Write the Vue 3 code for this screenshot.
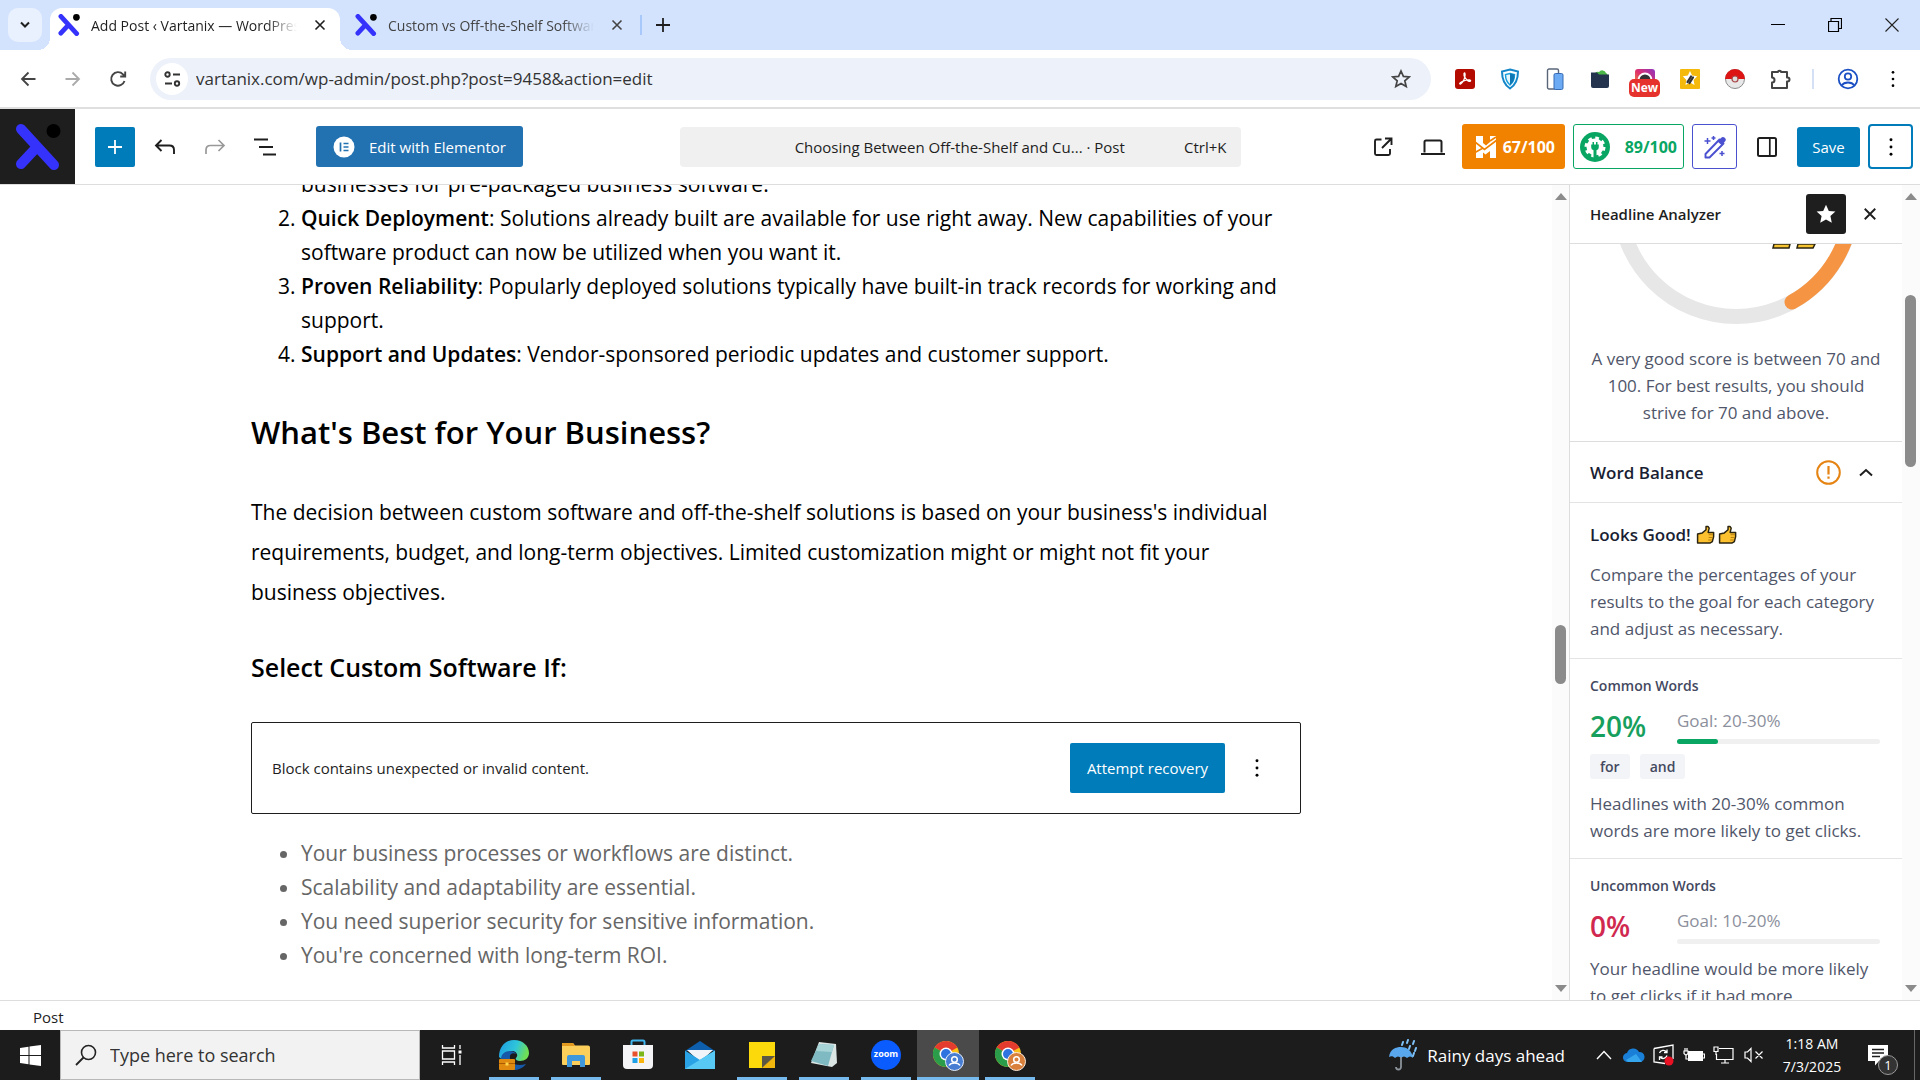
<template>
  <div class="screen">
    <!-- 公用图形 -->
    <svg class="defs" aria-hidden="true">
      <symbol id="logo" viewBox="0 0 46 46">
        <path d="M6 5 39 41M6 40 20 25" fill="none" stroke="#3532fb" stroke-width="10" stroke-linecap="round" />
        <circle cx="38.500" cy="7" r="7" fill="#000" />
      </symbol>
      <symbol id="cross" viewBox="0 0 12 12">
        <path d="M1.500 1.500l9 9M10.500 1.500l-9 9" fill="none" stroke="currentColor" stroke-width="1.600" />
      </symbol>
      <symbol id="dots" viewBox="0 0 6 24">
        <circle cx="3" cy="4" r="1.600" /><circle cx="3" cy="12" r="1.600" /><circle cx="3" cy="20" r="1.600" />
      </symbol>
      <symbol id="thumb" viewBox="0 0 18 18">
        <path d="M1.500 8.500 6 7.500 9.500 4.500V1.500h2l1 1.500-1 4h5.200v4l-1.200 4.800-2 1.200H1.500z" fill="#fdc12f" stroke="#2b2410" stroke-width="1.400" stroke-linejoin="round" />
        <path d="M12 9.200h4M12 11.800h3.700M11.500 14.200h3.600" stroke="#a8740e" stroke-width=".8" />
      </symbol>
      <symbol id="chrome" viewBox="0 0 32 32">
        <circle cx="14" cy="15" r="13" fill="#fbc116" />
        <path d="M14 15 2.700 8.500A13 13 0 0 1 25.300 8.500z" fill="#e33b2e" />
        <path d="M14 15 2.700 8.500A13 13 0 0 0 14 28l5-9z" fill="#2a9c4a" />
        <circle cx="14" cy="15" r="6.500" fill="#fff" /><circle cx="14" cy="15" r="5" fill="#2f73e0" />
      </symbol>
    </svg>

    <!-- 标签栏 -->
    <div class="tabs">
      <button class="tab-search" aria-label="Search tabs">
        <svg width="12" height="8" viewBox="0 0 12 8"><path d="M2 1.500 6 5.500 10 1.500" fill="none" stroke="#1f1f1f" stroke-width="2" /></svg>
      </button>
      <div v-for="tab in tabs" :key="tab.title" class="tab" :class="{ active: tab.active }">
        <svg class="fav" width="22" height="22"><use href="#logo" /></svg>
        <span class="tab-title">{{ tab.title }}</span>
        <button class="bare" aria-label="Close tab"><svg width="12" height="12"><use href="#cross" /></svg></button>
      </div>
      <span class="tab-sep"></span>
      <button class="new-tab bare" aria-label="New tab">
        <svg width="14" height="14" viewBox="0 0 14 14"><path d="M7 0v14M0 7h14" stroke="#1f1f1f" stroke-width="1.800" /></svg>
      </button>
      <div class="win">
        <button aria-label="Minimize"><svg width="14" height="14" viewBox="0 0 14 14"><path d="M0 6.500h14" stroke="#000" /></svg></button>
        <button aria-label="Restore"><svg width="14" height="14" viewBox="0 0 14 14"><path d="M.5 3.500h10v10H.5zM3 3.500V.5h10.500v10H11" fill="none" stroke="#000" stroke-width="1.200" /></svg></button>
        <button aria-label="Close"><svg width="14" height="14" viewBox="0 0 14 14"><path d="M.5.5l13 13M13.500.5l-13 13" stroke="#222" stroke-width="1.100" /></svg></button>
      </div>
    </div>

    <!-- 地址栏 -->
    <div class="toolbar">
      <button class="nav" aria-label="Back"><svg width="16" height="16" viewBox="0 0 16 16"><path d="M15.500 8H2M8.500 1.500 2 8l6.500 6.500" fill="none" stroke="#444" stroke-width="1.800" /></svg></button>
      <button class="nav" aria-label="Forward"><svg width="16" height="16" viewBox="0 0 16 16"><path d="M.5 8H14M7.500 1.500 14 8l-6.500 6.500" fill="none" stroke="#aaa" stroke-width="1.800" /></svg></button>
      <button class="nav" aria-label="Reload"><svg width="18" height="18" viewBox="0 0 18 18"><path d="M15.500 11A6.800 6.800 0 1 1 14 4.300L16 6.500M16.200 1.500v5h-5" fill="none" stroke="#444" stroke-width="1.900" /></svg></button>
      <div class="omni">
        <span class="site">
          <svg width="17" height="16" viewBox="0 0 17 16"><g fill="none" stroke="#333" stroke-width="1.900"><circle cx="3.500" cy="3.500" r="2.200" /><path d="M9 3.500h7M1 12.500h7" /><circle cx="13" cy="12.500" r="2.200" /></g></svg>
        </span>
        <input id="url" aria-label="Address" value="vartanix.com/wp-admin/post.php?post=9458&action=edit" />
        <svg width="20" height="20" viewBox="0 0 20 20"><path d="M10 2l2.400 5.400 5.900.5-4.500 3.900 1.400 5.800L10 14.500l-5.200 3.100 1.400-5.800-4.500-3.900 5.900-.5z" fill="none" stroke="#444" stroke-width="1.700" /></svg>
      </div>
      <div class="exts">
        <button aria-label="Acrobat"><svg width="22" height="22" viewBox="0 0 22 22"><rect x="1" y="1" width="20" height="20" rx="3" fill="#b30b00" /><path d="M10.500 5c1 0 .8 5-1.500 8.500-1.500 2.500-3.500 3-3.300 2 .3-1.500 5.500-3.800 9.800-3.500 1.800.2 1.300 1.800-.5 1.300C12 12.300 9.500 8 10 5.500z" fill="none" stroke="#fff" stroke-width="1.300" /></svg></button>
        <button aria-label="Shield"><svg width="20" height="22" viewBox="0 0 20 22"><path d="M10 1.500 18 3.500c0 8-2.500 13.500-8 17-5.500-3.500-8-9-8-17z" fill="#fff" stroke="#1586c8" stroke-width="2" /><path d="M10 5.500 14.500 6.500c0 5-1.500 8-4.500 10.500C7 14.500 5.500 11.500 5.500 6.500z" fill="#e6f7fd" stroke="#1aa0dc" stroke-width="1.500" /><path d="M10 5.500 14.500 6.500c0 5-1.500 8-4.500 10.500z" fill="#0e77b4" /></svg></button>
        <button aria-label="Devices"><svg width="18" height="22" viewBox="0 0 18 22"><rect x="1.500" y="1" width="11" height="20" rx="1.500" fill="#fff" stroke="#596579" stroke-width="1.400" /><rect x="8" y="5.500" width="9" height="16" rx="1.500" fill="#6cabf3" stroke="#376ab5" /></svg></button>
        <button aria-label="Folder"><svg width="22" height="22" viewBox="0 0 22 22"><path d="M6 8a3 3 0 0 1 4-4 4 4 0 0 1 7 1 2.500 2.500 0 0 1 1 4z" fill="#4cb749" /><path d="M2 4.500h6l2 2h10V18a2 2 0 0 1-2 2H4a2 2 0 0 1-2-2z" fill="#25344e" /></svg></button>
        <button aria-label="Instagram tool" class="ext-new">
          <svg width="22" height="22" viewBox="0 0 22 22"><defs><linearGradient id="ig" x1="0" y1="1" x2="1" y2="0"><stop offset="0" stop-color="#f7a429" /><stop offset=".5" stop-color="#dd2f6c" /><stop offset="1" stop-color="#9036c0" /></linearGradient></defs><rect x="1" y="1" width="20" height="20" rx="3" fill="url(#ig)" /><circle cx="11" cy="12" r="7.500" fill="#fff" /><circle cx="11" cy="12" r="5.500" fill="#333" /></svg>
          <span>New</span>
        </button>
        <button aria-label="Tag"><svg width="22" height="22" viewBox="0 0 22 22"><rect x="1" y="1" width="20" height="20" rx="1" fill="#f5b90b" /><path d="M11 3l2.200 4.600 5 .7-3.600 3.600.9 5.100-4.500-2.400L6.500 17l.9-5.100L3.800 8.300l5-.7z" fill="#fff" /><path d="M8.500 14 12 8.500M10.500 15 14 9.500" stroke="#333" stroke-width="2.200" stroke-linecap="round" /></svg></button>
        <button aria-label="Ball"><svg width="22" height="22" viewBox="0 0 22 22"><circle cx="11" cy="11" r="9.500" fill="#e8e8e8" stroke="#8b8b8b" /><path d="M1 11a10 10 0 0 1 20 0z" fill="#dc1414" /><circle cx="11" cy="11" r="3" fill="#ddd" stroke="#a44" stroke-width="1.200" /></svg></button>
        <button aria-label="Extensions"><svg width="22" height="22" viewBox="0 0 22 22"><path d="M3 4h6v-.5a2 2 0 0 1 3 0V4h6v5.500h.5a2 2 0 0 1 0 4H18V20H3v-5.500a2.500 2.500 0 0 0 0-5z" fill="none" stroke="#444" stroke-width="2" stroke-linejoin="round" /></svg></button>
      </div>
      <span class="bar-sep"></span>
      <button class="nav" aria-label="Profile"><svg width="22" height="22" viewBox="0 0 22 22"><g fill="none" stroke="#1b50c4" stroke-width="1.800"><circle cx="11" cy="11" r="9.300" /><circle cx="11" cy="8.500" r="3.200" /><path d="M4.500 17.500c3-4 10-4 13 0" /></g></svg></button>
      <button class="nav" aria-label="Menu"><svg width="6" height="20"><use href="#dots" /></svg></button>
    </div>

    <!-- 编辑器头部 -->
    <header class="editor-head">
      <div class="head-left">
        <a href="#" class="home" aria-label="View posts"><svg width="46" height="46"><use href="#logo" /></svg></a>
        <button class="inserter" aria-label="Add block"><svg width="16" height="16" viewBox="0 0 16 16"><path d="M8 1v14M1 8h14" stroke="#fff" stroke-width="1.800" /></svg></button>
        <button class="tool" aria-label="Undo"><svg width="22" height="18" viewBox="0 0 22 18"><path d="M7.500 2 2 7.500 7.500 13M2 7.500h13.500c3 0 4.500 1.500 4.500 4.500v4" fill="none" stroke="#1e1e1e" stroke-width="1.900" /></svg></button>
        <button class="tool" aria-label="Redo"><svg width="22" height="18" viewBox="0 0 22 18"><path d="M14.500 2 20 7.500 14.500 13M20 7.500H6.500C3.500 7.500 2 9 2 12v4" fill="none" stroke="#999" stroke-width="1.700" /></svg></button>
        <button class="tool" aria-label="Document overview"><svg width="24" height="18" viewBox="0 0 24 18"><path d="M1 1.500h14M6 9h14M10 16.500h13" stroke="#1e1e1e" stroke-width="1.900" /></svg></button>
        <button class="elementor">
          <svg width="22" height="22" viewBox="0 0 22 22"><circle cx="11" cy="11" r="10.500" fill="#fff" /><path d="M7.500 6.500v9M10.500 7.500h5M10.500 11h5M10.500 14.500h5" stroke="#2271b1" stroke-width="1.700" /></svg>
          Edit with Elementor
        </button>
      </div>
      <button class="command">
        <span>Choosing Between Off-the-Shelf and Cu... · Post</span>
        <kbd>Ctrl+K</kbd>
      </button>
      <div class="head-right">
        <button class="tool small" aria-label="View post"><svg width="20" height="20" viewBox="0 0 20 20"><path d="M8.500 2.500H3.500A1.500 1.500 0 0 0 2 4v12.500A1.500 1.500 0 0 0 3.500 18H15.500a1.500 1.500 0 0 0 1.500-1.500V12M12 1.500h6.500V8M18.500 1.500 9 11" fill="none" stroke="#1e1e1e" stroke-width="1.900" /></svg></button>
        <button class="tool small" aria-label="Preview"><svg width="26" height="18" viewBox="0 0 26 18"><path d="M4.500 14.500V4A1.500 1.500 0 0 1 6 2.500h14A1.500 1.500 0 0 1 21.500 4v10.500M1 16h24" fill="none" stroke="#1e1e1e" stroke-width="2" /></svg></button>
        <button class="score orange">
          <svg width="24" height="24" viewBox="0 0 24 24"><path d="M2 1h7v22H2zM16 1h6v22h-6zM9 8l3 2.500L16 7v9l-4.500 3.500L9 17.500z" fill="#fff" /><path d="M1 7l9.500 7.500L23 5M1 17.500 9 13M16 6l6-4" fill="none" stroke="#f18200" stroke-width="1.600" /></svg>
          67/100
        </button>
        <button class="score green">
          <svg width="30" height="30" viewBox="0 0 30 30"><circle cx="15" cy="15" r="15" fill="#09a663" /><circle cx="15" cy="15" r="8.500" fill="#fff" /><circle cx="15" cy="15" r="9" fill="none" stroke="#fff" stroke-width="3" stroke-dasharray="3.600 3.470" /><path d="M11.200 12.500h1.300V10h1.500v2.500h2V10h1.500v2.500h1.300v2.700a3 3 0 0 1-2.300 3V26h-3v-7.800a3 3 0 0 1-2.300-3z" fill="#09a663" /></svg>
          89/100
        </button>
        <button class="magic" aria-label="AI assistant"><svg width="24" height="24" viewBox="0 0 24 24"><path d="M2.500 19 16.500 4.500l4 4L6.500 22.500h-4z" fill="none" stroke="#4a50d0" stroke-width="1.900" stroke-linejoin="round" /><path d="M14.500 6.500 18 3a2.500 2.500 0 0 1 4 3.500L18.500 10z" fill="#4a50d0" /><path d="M4.500 3v6M1.500 6h6M10.500 1v4M8.500 3h4M19 16v5M16.500 18.500h5" stroke="#4a50d0" stroke-width="1.500" /></svg></button>
        <button class="tool panel" aria-label="Settings"><svg width="20" height="20" viewBox="0 0 20 20"><rect x="1" y="1" width="18" height="18" rx="1.500" fill="none" stroke="#1e1e1e" stroke-width="2" /><path d="M12.800 1v18" stroke="#1e1e1e" stroke-width="1.700" /></svg></button>
        <button class="save">Save</button>
        <button class="options" aria-label="Options"><svg width="6" height="22"><use href="#dots" /></svg></button>
      </div>
    </header>

    <!-- 主体 -->
    <div class="body">
      <main class="canvas">
        <article class="post">
          <ol>
            <li class="tail">businesses for pre-packaged business software.</li>
            <li v-for="item in benefits" :key="item.name"><strong>{{ item.name }}</strong>: {{ item.text }}</li>
          </ol>
          <h2>What's Best for Your Business?</h2>
          <p>The decision between custom software and off-the-shelf solutions is based on your business's individual requirements, budget, and long-term objectives. Limited customization might or might not fit your business objectives.</p>
          <h3>Select Custom Software If:</h3>
          <div class="warning">
            <span>Block contains unexpected or invalid content.</span>
            <button class="recover">Attempt recovery</button>
            <button class="bare" aria-label="More options"><svg width="6" height="22"><use href="#dots" /></svg></button>
          </div>
          <ul>
            <li v-for="reason in reasons" :key="reason">{{ reason }}</li>
          </ul>
        </article>
      </main>
      <div class="scroll editor-scroll">
        <i class="up"></i><i class="thumb editor-thumb"></i><i class="down"></i>
      </div>

      <aside class="side">
        <div class="side-main">
          <div class="side-head">
            <h4>Headline Analyzer</h4>
            <button class="pin" aria-label="Unpin"><svg width="20" height="20" viewBox="0 0 20 20"><path d="M10 .8l2.800 6.100 6.600.7-5 4.500 1.400 6.600L10 15.400l-5.800 3.300 1.400-6.600-5-4.500 6.600-.7z" fill="#fff" /></svg></button>
            <button class="bare" aria-label="Close"><svg width="14" height="14"><use href="#cross" /></svg></button>
          </div>
          <div class="side-scroll">
            <section class="gauge">
              <svg width="250" height="80" viewBox="0 0 250 80">
                <circle cx="125" cy="-44" r="116.500" fill="none" stroke="#e7e7e7" stroke-width="15" />
                <path d="M241 -44A116.500 116.500 0 0 1 181 58" fill="none" stroke="#f59544" stroke-width="15" stroke-linecap="round" />
                <path d="M163 0h16l-1 4h-16zM187 0h17l-2 4h-16z" fill="#f6c331" stroke="#2b2410" stroke-width="1.500" />
              </svg>
              <p>A very good score is between 70 and 100. For best results, you should strive for 70 and above.</p>
            </section>
            <button class="balance">
              <span>Word Balance</span>
              <svg width="25" height="25" viewBox="0 0 25 25"><circle cx="12.500" cy="12.500" r="11.300" fill="none" stroke="#e58412" stroke-width="2" /><path d="M12.500 6v8.500M12.500 16.500v2.300" stroke="#e58412" stroke-width="2.200" /></svg>
              <svg width="14" height="9" viewBox="0 0 14 9"><path d="M1 7.500 7 2l6 5.500" fill="none" stroke="#1e1e1e" stroke-width="2" /></svg>
            </button>
            <section class="looks">
              <h4><span>Looks Good!</span><svg width="19" height="19"><use href="#thumb" /></svg><svg width="19" height="19"><use href="#thumb" /></svg></h4>
              <p>Compare the percentages of your results to the goal for each category and adjust as necessary.</p>
            </section>
            <section v-for="w in words" :key="w.name" class="words">
              <h5>{{ w.name }}</h5>
              <div class="result">
                <strong :class="w.level">{{ w.value }}%</strong>
                <div class="goal">
                  <span>Goal: {{ w.goal }}</span>
                  <div class="track"><div :style="{ width: w.value + '%' }"></div></div>
                </div>
              </div>
              <div v-if="w.tags.length" class="tags"><span v-for="t in w.tags" :key="t">{{ t }}</span></div>
              <p>{{ w.tip }}</p>
            </section>
          </div>
        </div>
        <div class="scroll">
          <i class="up"></i><i class="thumb side-thumb"></i><i class="down"></i>
        </div>
      </aside>
    </div>

    <footer class="crumbs">Post</footer>

    <!-- 任务栏 -->
    <div class="taskbar">
      <button class="start" aria-label="Start"><svg width="21" height="21" viewBox="0 0 21 21"><path d="M0 3 8.500 1.700V10H0zM9.500 1.500 21 0v10H9.500zM0 11h8.500v8.300L0 18zM9.500 11H21v10L9.500 19.500z" fill="#fff" /></svg></button>
      <label class="find">
        <svg width="22" height="22" viewBox="0 0 22 22"><circle cx="13.500" cy="8.500" r="7" fill="none" stroke="#222" stroke-width="1.600" /><path d="M8.500 13.500 1 21" stroke="#222" stroke-width="1.800" /></svg>
        <input type="text" placeholder="Type here to search" aria-label="Search" />
      </label>
      <button class="view" aria-label="Task view"><svg width="22" height="20" viewBox="0 0 22 20"><path d="M1.500 0v3h12V0M1.500 20v-3h12v3M1.500 6h12v8h-12zM19 0v4M19 10v10" fill="none" stroke="#fff" stroke-width="1.300" /><rect x="17.500" y="5.500" width="3" height="3" fill="#fff" /></svg></button>
      <div class="apps">
        <button class="open" aria-label="Edge"><svg width="32" height="32" viewBox="0 0 32 32"><defs><linearGradient id="edge" x1="0" y1="0" x2="1" y2=".3"><stop offset="0" stop-color="#1b9be4" /><stop offset=".6" stop-color="#2fc5da" /><stop offset="1" stop-color="#6fdf55" /></linearGradient></defs><path d="M1 18C1 7 8 1 16 1c9 0 15 6 15 13 0 5-4 8-9 8-4 0-5-2-4-3 3-3 0-7-4-7-6 0-8 5-6 12z" fill="url(#edge)" /><path d="M12 17c-1 7 6 11 16 8-3 4-8 6-12 6C8 31 3 26 3 20c0-5 4-8 9-8 3 0 5 1 6 3-3-2-6 0-6 2z" fill="#1659a8" /><rect x="1" y="20" width="16" height="11" rx="1" fill="#e08a0f" /><path d="M1 24.500h16" stroke="#a95c05" /><rect x="7.500" y="23.500" width="3" height="3" fill="#ffd34a" /></svg></button>
        <button class="open" aria-label="File Explorer"><svg width="30" height="30" viewBox="0 0 30 30"><path d="M1 3h11l2 2.500h13a2 2 0 0 1 2 2V24a1 1 0 0 1-1 1H2a1 1 0 0 1-1-1z" fill="#fccf5a" /><path d="M1 3h11l2 3H1z" fill="#e29b20" /><path d="M6 27V17a2 2 0 0 1 2-2h14a2 2 0 0 1 2 2v10h-5v-6h-8v6z" fill="#3f97dc" /></svg></button>
        <button aria-label="Store"><svg width="30" height="32" viewBox="0 0 30 32"><path d="M8.500 7V3a1.500 1.500 0 0 1 1.500-1.500h10A1.500 1.500 0 0 1 21.500 3v4" fill="none" stroke="#41b4ec" stroke-width="2" /><path d="M0 6h30v20a4 4 0 0 1-4 4H4a4 4 0 0 1-4-4z" fill="#f4f4f6" /><path d="M9.500 12.500h5v5h-5z" fill="#e8502b" /><path d="M16 12.500h5v5h-5z" fill="#7cb518" /><path d="M9.500 19h5v5h-5z" fill="#1e9fe6" /><path d="M16 19h5v5h-5z" fill="#f9b50d" /></svg></button>
        <button aria-label="Mail"><svg width="30" height="30" viewBox="0 0 30 30"><path d="M0 11 15 1l15 10z" fill="#0d5fae" /><path d="M2 10h26L15 22z" fill="#f1f5f9" /><path d="M0 10.500 15 20 30 10.500V29H0z" fill="#29a3e6" /><path d="M0 29 30 10.500V29z" fill="#58c8f5" /></svg></button>
        <button class="open" aria-label="Sticky Notes"><svg width="28" height="28" viewBox="0 0 28 28"><path d="M1 1h26v14L14 27H1z" fill="#fbd90a" /><path d="M14 27V15h13z" fill="#5c5644" /><path d="M14 27 27 15v12z" fill="#f2b70d" /></svg></button>
        <button class="open" aria-label="Notepad"><svg width="28" height="28" viewBox="0 0 28 28"><path d="M9 1 26 3 27 22l-5 4L1 22z" fill="#dbe5e4" /><path d="M9 3 24 4 18 25 1 20z" fill="#7fbac2" /><path d="M9 3 24 4 22 11 6 10z" fill="#a7d4d7" /></svg></button>
        <button class="open" aria-label="Zoom"><span class="zoom">zoom</span></button>
        <button class="open current" aria-label="Chrome"><svg width="32" height="32" viewBox="0 0 32 32"><use href="#chrome" /><circle cx="22.500" cy="22.500" r="9" fill="#477dd2" stroke="#e3ecfb" /><circle cx="22.500" cy="20.500" r="2.800" fill="none" stroke="#fff" stroke-width="1.500" /><path d="M17 26.500c2-3.500 9-3.500 11 0" fill="none" stroke="#fff" stroke-width="1.500" /></svg></button>
        <button class="open" aria-label="Chrome profile 2"><svg width="32" height="32" viewBox="0 0 32 32"><use href="#chrome" /><circle cx="22.500" cy="22.500" r="9" fill="#d9813c" stroke="#fbeadb" /><circle cx="22.500" cy="20.500" r="2.800" fill="none" stroke="#fff" stroke-width="1.500" /><path d="M17 26.500c2-3.500 9-3.500 11 0" fill="none" stroke="#fff" stroke-width="1.500" /></svg></button>
      </div>
      <div class="tray">
        <button class="weather">
          <svg width="30" height="32" viewBox="0 0 30 32"><path d="M1 18C2 10 8 8 13 8s11 3 12 11c-2-2-4-2-6 0-2-2-4-2-6 0-2-2-4-2-6 0-2-2-4-2-6-1z" fill="#59a8ee" /><path d="M13 18v10a2.500 2.500 0 0 1-5 0" fill="none" stroke="#8b9299" stroke-width="1.800" /><path d="M15 3l-1 3M20 1l-1 3M26 2l-1 3M22 7l-1 3M28 9l-1 3M26 14l-1 3" stroke="#7fc3fa" stroke-width="2" stroke-linecap="round" /></svg>
          Rainy days ahead
        </button>
        <button aria-label="Hidden icons"><svg width="16" height="10" viewBox="0 0 16 10"><path d="M1 9 8 1.500 15 9" fill="none" stroke="#fff" stroke-width="1.400" /></svg></button>
        <button aria-label="OneDrive"><svg width="22" height="16" viewBox="0 0 22 16"><path d="M5 15a4.500 4.500 0 0 1-1-9 6.500 6.500 0 0 1 12-1 5 5 0 0 1 1 10z" fill="#1a7fd6" /><path d="M3 13 13 7l6 8H5z" fill="#35a6ee" /></svg></button>
        <button aria-label="Updates"><svg width="22" height="22" viewBox="0 0 22 22"><path d="M1 4.500 20 1v14M1 4.500V18l11 1.500" fill="none" stroke="#fff" stroke-width="1.300" /><path d="M6.500 9a4 4 0 0 1 7-1M14 5.500V8.500h-3M14 11.500a4 4 0 0 1-7 1.500M6.500 16v-3h3" fill="none" stroke="#fff" stroke-width="1.300" /><circle cx="16" cy="17" r="4.500" fill="#e81224" /></svg></button>
        <button aria-label="Battery"><svg width="22" height="16" viewBox="0 0 22 16"><rect x="5.500" y="4.500" width="14" height="9" fill="#fff" stroke="#fff" /><path d="M20 7h1.500v4H20M1 4h4v2.500L3 8.500 1 6.500zM2 4V1M4 4V1M3 8v4h2" fill="none" stroke="#fff" stroke-width="1.200" /></svg></button>
        <button aria-label="Network"><svg width="22" height="18" viewBox="0 0 22 18"><path d="M6 2.500h14v11H3.500V8M12 13.500V17M8 17h8M1 1h4v4.500H1zM3 5.500V9" fill="none" stroke="#fff" stroke-width="1.200" /></svg></button>
        <button aria-label="Muted"><svg width="20" height="16" viewBox="0 0 20 16"><path d="M1 5h2.500L7 1.500v13L3.500 11H1zM11.500 4.500l7 7M18.500 4.500l-7 7" fill="none" stroke="#fff" stroke-width="1.200" /></svg></button>
        <div class="clock"><span>1:18 AM</span><span>7/3/2025</span></div>
        <button class="notes" aria-label="Notifications">
          <svg width="20" height="21" viewBox="0 0 20 21"><path d="M0 0h20v16h-9l-4 4.500V16H0z" fill="#fff" /><path d="M4 4.500h12M4 8h12M4 11.500h8" stroke="#1c1c1c" stroke-width="1.500" /></svg>
          <span>1</span>
        </button>
      </div>
    </div>
  </div>
</template>

<script setup>
import { ref } from 'vue';

const tabs = ref([
  { title: 'Add Post ‹ Vartanix — WordPress', active: true },
  { title: 'Custom vs Off-the-Shelf Software', active: false }
]);

// 正文列表
const benefits = [
  { name: 'Quick Deployment', text: 'Solutions already built are available for use right away. New capabilities of your software product can now be utilized when you want it.' },
  { name: 'Proven Reliability', text: 'Popularly deployed solutions typically have built-in track records for working and support.' },
  { name: 'Support and Updates', text: 'Vendor-sponsored periodic updates and customer support.' }
];

const reasons = [
  'Your business processes or workflows are distinct.',
  'Scalability and adaptability are essential.',
  'You need superior security for sensitive information.',
  "You're concerned with long-term ROI."
];

// 标题分析结果
const words = ref([
  { name: 'Common Words', value: 20, goal: '20-30%', level: 'good', tags: ['for', 'and'], tip: 'Headlines with 20-30% common words are more likely to get clicks.' },
  { name: 'Uncommon Words', value: 0, goal: '10-20%', level: 'bad', tags: [], tip: 'Your headline would be more likely to get clicks if it had more' }
]);
</script>

<style>
html, body {
  margin: 0;
  overflow: hidden;
}
</style>

<style scoped>
* {
  box-sizing: border-box;
}

.screen {
  display: flex;
  flex-direction: column;
  height: 100vh;
  background: #fff;
  color: #1e1e1e;
  font-family: "Open Sans", "Noto Sans", sans-serif;
  font-size: 15px;
}

.defs {
  position: absolute;
  width: 0;
  height: 0;
}

button {
  display: flex;
  align-items: center;
  justify-content: center;
  flex: none;
  padding: 0;
  border: 0;
  background: none;
  color: inherit;
  font: inherit;
  white-space: nowrap;
}

input {
  min-width: 0;
  padding: 0;
  border: 0;
  outline: 0;
  background: none;
  font: inherit;
}

svg {
  flex: none;
}

h2, h3, h4, h5, p, ol, ul {
  margin: 0;
}

/* 标签栏 */
.tabs {
  display: flex;
  align-items: center;
  flex: none;
  height: 50px;
  padding-left: 8px;
  background: #d3e3fd;
}

.tab-search {
  width: 34px;
  height: 34px;
  margin-right: 8px;
  border-radius: 10px;
  background: #e9f1fe;
}

.bare {
  width: 24px;
  height: 24px;
}

.tab {
  position: relative;
  display: flex;
  align-items: center;
  align-self: flex-end;
  width: 290px;
  height: 42px;
  padding: 0 8px 8px;
  color: #444;
  font-size: 14px;
}

.tab + .tab {
  margin-left: 7px;
}

.tab.active {
  border-radius: 12px 12px 0 0;
  background: #fff;
  color: #1f1f1f;
}

.tab.active::before,
.tab.active::after {
  content: '';
  position: absolute;
  bottom: 0;
  width: 12px;
  height: 12px;
}

.tab.active::before {
  left: -12px;
  background: radial-gradient(circle at 0 0, transparent 12px, #fff 12px);
}

.tab.active::after {
  right: -12px;
  background: radial-gradient(circle at 100% 0, transparent 12px, #fff 12px);
}

.tab-title {
  flex: 1;
  margin: 0 11px;
  overflow: hidden;
  white-space: nowrap;
  -webkit-mask-image: linear-gradient(90deg, #000 85%, transparent);
  mask-image: linear-gradient(90deg, #000 85%, transparent);
}

.tab-sep {
  width: 2px;
  height: 20px;
  margin-left: 3px;
  background: #a8c7fa;
}

.new-tab {
  margin-left: 9px;
}

.win {
  display: flex;
  margin-left: auto;
}

.win button {
  width: 57px;
  height: 46px;
}

/* 地址栏 */
.toolbar {
  display: flex;
  align-items: center;
  flex: none;
  height: 59px;
  padding: 0 5px;
  border-bottom: 2px solid #dfdfdf;
}

.nav {
  width: 45px;
  height: 40px;
}

.omni {
  display: flex;
  align-items: center;
  flex: 1;
  height: 42px;
  margin: 0 11px 0 10px;
  padding: 0 20px 0 6px;
  border-radius: 21px;
  background: #edf1fa;
}

.omni input {
  flex: 1;
  color: #333;
  font-size: 17px;
}

.site {
  display: flex;
  align-items: center;
  justify-content: center;
  width: 32px;
  height: 32px;
  margin-right: 8px;
  border-radius: 50%;
  background: #fff;
}

.exts {
  display: flex;
}

.exts button {
  position: relative;
  width: 45px;
  height: 40px;
}

.ext-new span {
  position: absolute;
  top: 20px;
  left: 7px;
  width: 31px;
  border-radius: 5px;
  background: #e5322d;
  color: #fff;
  font-size: 12px;
  font-weight: 700;
  line-height: 18px;
  text-align: center;
}

.bar-sep {
  width: 2px;
  height: 20px;
  margin: 0 11px 0 10px;
  background: #d3e0f5;
}

/* 编辑器头部 */
.editor-head {
  display: grid;
  grid-template-columns: 1fr 561px 1fr;
  align-items: center;
  flex: none;
  height: 76px;
  border-bottom: 1px solid #ddd;
}

.head-left,
.head-right {
  display: flex;
  align-items: center;
}

.head-right {
  justify-content: flex-end;
  gap: 8px;
  padding-right: 7px;
}

.home {
  display: flex;
  align-items: center;
  justify-content: center;
  width: 75px;
  height: 75px;
  background: #1e1e1e;
}

.inserter {
  width: 40px;
  height: 40px;
  margin: 0 5px 0 20px;
  border-radius: 2px;
  background: #007cba;
}

.tool {
  width: 50px;
  height: 40px;
}

.tool.small {
  width: 42px;
}

.tool.panel {
  width: 44px;
}

.elementor {
  gap: 14px;
  height: 41px;
  margin-left: 26px;
  padding: 0 17px;
  border-radius: 3px;
  background: #2271b1;
  color: #fff;
}

.command {
  height: 40px;
  padding: 0 14px 0 56px;
  border-radius: 4px;
  background: #f0f0f0;
}

.command span {
  flex: 1;
}

.command kbd {
  font: inherit;
}

.score {
  justify-content: space-between;
  height: 45px;
  border-radius: 3px;
  font-size: 16px;
  font-weight: 700;
}

.orange {
  width: 103px;
  padding: 0 10px 0 12px;
  background: #f18200;
  color: #fff;
}

.green {
  width: 111px;
  padding: 0 6px;
  border: 1px solid #09a663;
  color: #09a663;
}

.magic {
  width: 45px;
  height: 45px;
  border: 1px solid #4a50d0;
  border-radius: 3px;
}

.save {
  width: 63px;
  height: 40px;
  border-radius: 3px;
  background: #007cba;
  color: #fff;
}

.options {
  width: 45px;
  height: 45px;
  border: 2px solid #007cba;
  border-radius: 4px;
}

/* 主体 */
.body {
  display: flex;
  flex: 1;
  min-height: 0;
}

.canvas {
  flex: 1;
  overflow: hidden;
}

.post {
  max-width: 1050px;
  margin: -18px auto 0;
  color: #000;
  font-size: 21px;
  line-height: 34px;
}

ol, ul {
  padding-left: 50px;
}

.tail {
  list-style: none;
}

strong {
  font-weight: 600;
}

h2 {
  margin: 42px 0 41px;
  font-size: 31px;
  font-weight: 600;
  line-height: 38px;
}

.post p {
  padding-right: 12px;
  line-height: 40px;
}

h3 {
  margin: 39px 0 39px;
  font-size: 25px;
  font-weight: 600;
  line-height: 32px;
}

.warning {
  display: flex;
  align-items: center;
  height: 92px;
  padding: 0 31px 0 20px;
  border: 1px solid #1e1e1e;
  border-radius: 2px;
  color: #1e1e1e;
  font-size: 15px;
}

.warning span {
  flex: 1;
}

.recover {
  width: 155px;
  height: 50px;
  margin-right: 20px;
  border-radius: 2px;
  background: #007cba;
  color: #fff;
}

ul {
  margin-top: 22px;
  color: #666;
}

/* 滚动条 */
.scroll {
  position: relative;
  flex: none;
  width: 18px;
  background: #fbfbfb;
}

.editor-scroll {
  width: 17px;
}

.scroll i {
  position: absolute;
  left: 3px;
}

.up, .down {
  border: 6px solid transparent;
}

.up {
  top: 2px;
  border-bottom: 7px solid #8b8b8b;
}

.down {
  bottom: 2px;
  border-top: 7px solid #8b8b8b;
}

.thumb {
  width: 11px;
  border-radius: 6px;
  background: #8b8b8b;
}

.editor-thumb {
  top: 54%;
  height: 59px;
}

.side-thumb {
  top: 110px;
  height: 172px;
}

/* 侧边栏 */
.side {
  display: flex;
  flex: none;
  width: 351px;
  border-left: 1px solid #ddd;
}

.side-main {
  display: flex;
  flex-direction: column;
  flex: 1;
}

.side-head {
  display: flex;
  align-items: center;
  flex: none;
  height: 59px;
  padding: 0 20px;
  border-bottom: 1px solid #ddd;
}

.side-head h4 {
  flex: 1;
  font-size: 15px;
  font-weight: 600;
}

.pin {
  width: 40px;
  height: 40px;
  margin-right: 12px;
  border-radius: 3px;
  background: #1e1e1e;
}

.side-scroll {
  flex: 1;
  overflow: hidden;
}

.side-scroll p {
  color: #50566a;
  font-size: 17px;
  line-height: 27px;
}

.gauge {
  height: 198px;
  border-bottom: 1px solid #ddd;
  text-align: center;
}

.gauge svg {
  display: block;
  margin: 0 auto 21px;
}

.gauge p {
  padding: 0 20px;
}

.balance {
  width: 100%;
  height: 61px;
  padding: 0 29px 0 20px;
  border-bottom: 1px solid #e4e4e4;
  color: #1a1e33;
  font-size: 17px;
  font-weight: 600;
}

.balance span {
  flex: 1;
  text-align: left;
}

.balance svg + svg {
  margin-left: 18px;
}

.looks {
  height: 156px;
  padding: 18px 20px 0;
  border-bottom: 1px solid #e4e4e4;
}

.looks h4 {
  display: flex;
  align-items: center;
  gap: 3px;
  margin-bottom: 13px;
  color: #1a1e33;
  font-size: 17px;
  font-weight: 600;
  line-height: 27px;
}

.looks h4 span {
  margin-right: 2px;
}

.words {
  padding: 15px 22px 14px 20px;
  border-bottom: 1px solid #e4e4e4;
}

h5 {
  color: #434960;
  font-size: 14px;
  font-weight: 600;
  line-height: 24px;
}

.result {
  display: flex;
  margin-top: 9px;
}

.result strong {
  width: 87px;
  font-size: 28px;
  line-height: 38px;
}

.good {
  color: #17a05d;
}

.bad {
  color: #d0284f;
}

.goal {
  flex: 1;
  color: #8c8f9c;
  font-size: 17px;
  line-height: 27px;
}

.track {
  height: 5px;
  margin-top: 5px;
  border-radius: 3px;
  background: #f0f0f0;
}

.track div {
  height: 5px;
  border-radius: 3px;
  background: #09a663;
}

.tags {
  display: flex;
  gap: 10px;
  margin: 9px 0 11px;
}

.tags span {
  padding: 0 10px;
  border-radius: 3px;
  background: #f3f4f7;
  color: #434960;
  font-size: 14px;
  font-weight: 600;
  line-height: 25px;
}

.result + p {
  margin-top: 10px;
}

.crumbs {
  flex: none;
  height: 30px;
  padding-left: 33px;
  border-top: 1px solid #ddd;
  line-height: 33px;
}

/* 任务栏 */
.taskbar {
  display: flex;
  flex: none;
  height: 50px;
  background: #1c1c1c;
  color: #fff;
}

.start {
  width: 60px;
}

.find {
  display: flex;
  align-items: center;
  gap: 13px;
  width: 360px;
  padding: 0 14px;
  border: 1px solid #b8b8b8;
  background: #f2f2f2;
  font-size: 18px;
}

.find input {
  flex: 1;
}

.find input::placeholder {
  color: #333;
  opacity: 1;
}

.view {
  width: 63px;
}

.apps {
  display: flex;
}

.apps button {
  position: relative;
  width: 62px;
}

.open::after {
  content: '';
  position: absolute;
  right: 6px;
  bottom: 0;
  left: 6px;
  height: 3px;
  background: #76b9ed;
}

.apps .current {
  background: #4a4a4a;
}

.current::after {
  right: 0;
  left: 0;
}

.zoom {
  width: 30px;
  height: 30px;
  border-radius: 50%;
  background: #0b5cff;
  font-size: 9px;
  font-weight: 700;
  line-height: 28px;
}

.tray {
  display: flex;
  margin-left: auto;
  margin-right: 5px;
  border-right: 1px solid #666;
}

.tray button {
  width: 30px;
}

.tray .weather {
  gap: 9px;
  width: auto;
  margin-right: 24px;
  font-size: 17px;
}

.clock {
  display: flex;
  flex-direction: column;
  justify-content: center;
  width: 86px;
  font-size: 14px;
  line-height: 23px;
  text-align: center;
}

.tray .notes {
  position: relative;
  justify-content: flex-start;
  width: 59px;
  padding-left: 13px;
}

.notes span {
  position: absolute;
  top: 25px;
  left: 23px;
  width: 20px;
  height: 20px;
  border: 1px solid #999;
  border-radius: 50%;
  background: #333;
  font-size: 13px;
  line-height: 18px;
}
</style>
